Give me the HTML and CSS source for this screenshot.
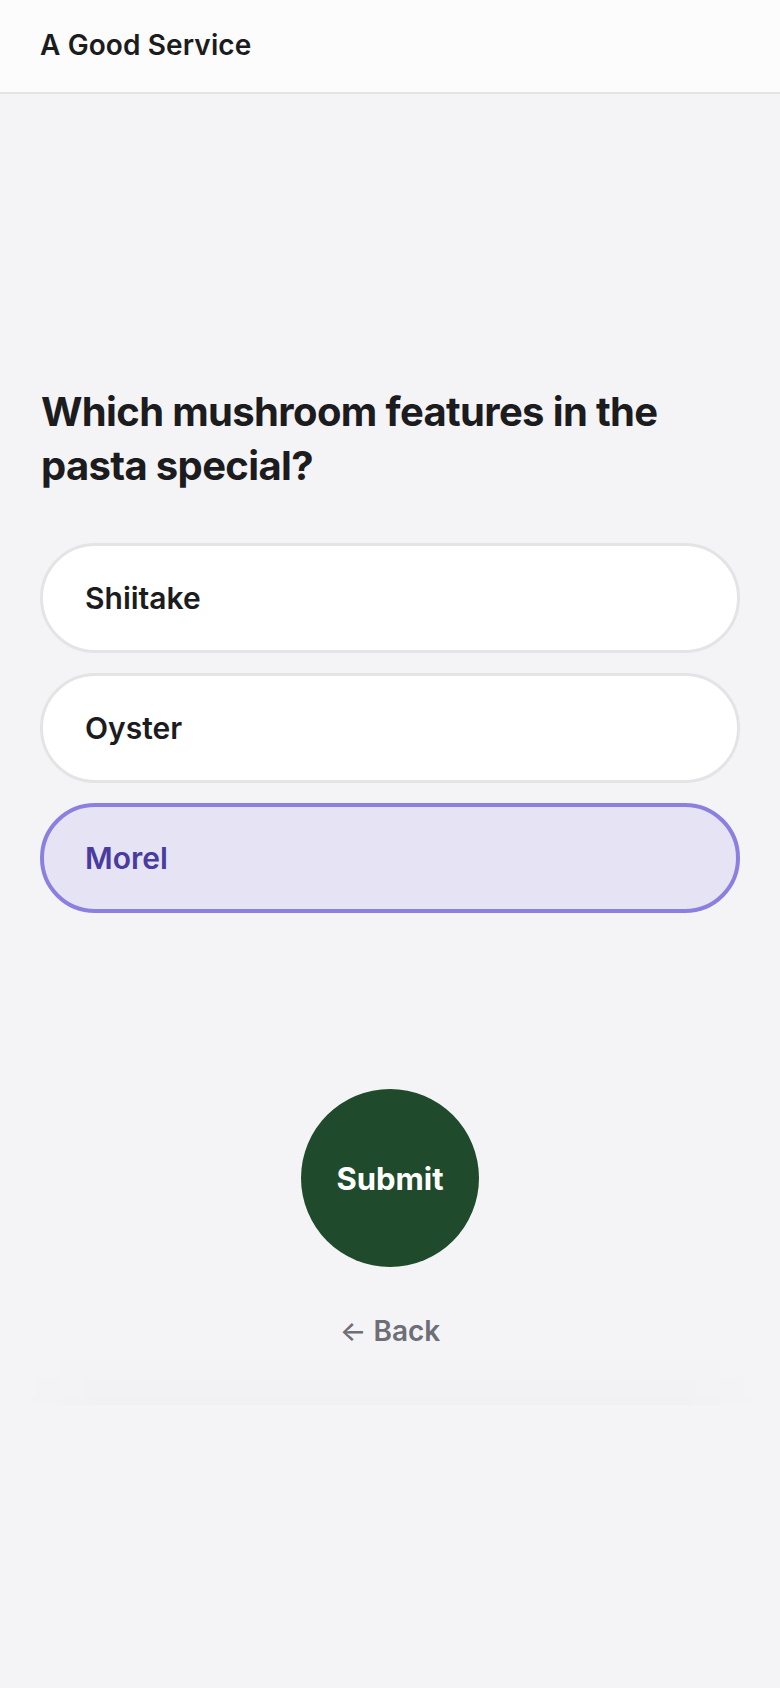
FILE: index.html
```html
<!DOCTYPE html>
<html lang="en">
<head>
<meta charset="utf-8">
<title>A Good Service</title>
<link rel="stylesheet" href="styles.css">
</head>
<body>
<header class="topbar">
  <span class="brand">A Good Service</span>
</header>
<main class="quiz">
  <h1 class="question">Which mushroom features in the pasta special?</h1>
  <div class="options">
    <button class="option">Shiitake</button>
    <button class="option">Oyster</button>
    <button class="option selected">Morel</button>
  </div>
  <div class="actions">
    <button class="submit">Submit</button>
    <a class="back" href="#"><span class="arrow">&larr;</span> Back</a>
  </div>
  <div class="fade"></div>
</main>
</body>
</html>
```

FILE: styles.css
```css
* { box-sizing: border-box; }
html, body { margin: 0; padding: 0; }
body {
  background: #f4f4f6;
  font-family: Inter, "Noto Sans", "Liberation Sans", sans-serif;
  color: #1c1c1e;
  min-height: 1688px;
}
.topbar {
  height: 94px;
  background: #fcfcfc;
  border-bottom: 2px solid #e4e4e7;
  display: flex;
  align-items: center;
  padding: 0 40px;
}
.brand {
  font-size: 28px;
  font-weight: 600;
  letter-spacing: 0.1px;
  color: #1c1c1e;
  margin-top: -2px;
}
.quiz {
  padding: 291px 40px 0;
  display: flex;
  flex-direction: column;
}
.question {
  margin: 0;
  font-size: 40px;
  line-height: 54px;
  font-weight: 700;
  letter-spacing: -0.65px;
  color: #1c1c1e;
  padding-left: 1px;
}
.options {
  margin-top: 50px;
  display: flex;
  flex-direction: column;
  gap: 20px;
}
.option {
  height: 110px;
  border-radius: 55px;
  border: 3px solid #e4e4e7;
  background: #ffffff;
  text-align: left;
  padding: 0 0 0 42px;
  font-family: inherit;
  font-size: 30px;
  font-weight: 600;
  color: #1c1c1e;
  letter-spacing: 0;
}
.option.selected {
  border: 4px solid #8b80e0;
  background: #e6e3f5;
  color: #4a3b9e;
  padding-left: 41px;
}
.actions {
  margin-top: 176px;
  display: flex;
  flex-direction: column;
  align-items: center;
}
.submit {
  width: 178px;
  height: 178px;
  border-radius: 50%;
  border: none;
  background: #1f4a2c;
  color: #ffffff;
  font-family: inherit;
  font-size: 31px;
  font-weight: 700;
  letter-spacing: 0;
}
.back {
  margin-top: 44px;
  line-height: 40px;
  font-size: 28px;
  font-weight: 600;
  color: #6e6e76;
  text-decoration: none;
}
.back .arrow {
  font-weight: 500;
}
.fade {
  margin: 0 -25px 0;
  height: 54px;
  background: linear-gradient(to bottom, rgba(0,0,0,0) 0%, rgba(0,0,0,0.013) 100%);
  -webkit-mask-image: linear-gradient(to right, transparent 0%, #000 12%, #000 88%, transparent 100%);
  mask-image: linear-gradient(to right, transparent 0%, #000 12%, #000 88%, transparent 100%);
}
```
